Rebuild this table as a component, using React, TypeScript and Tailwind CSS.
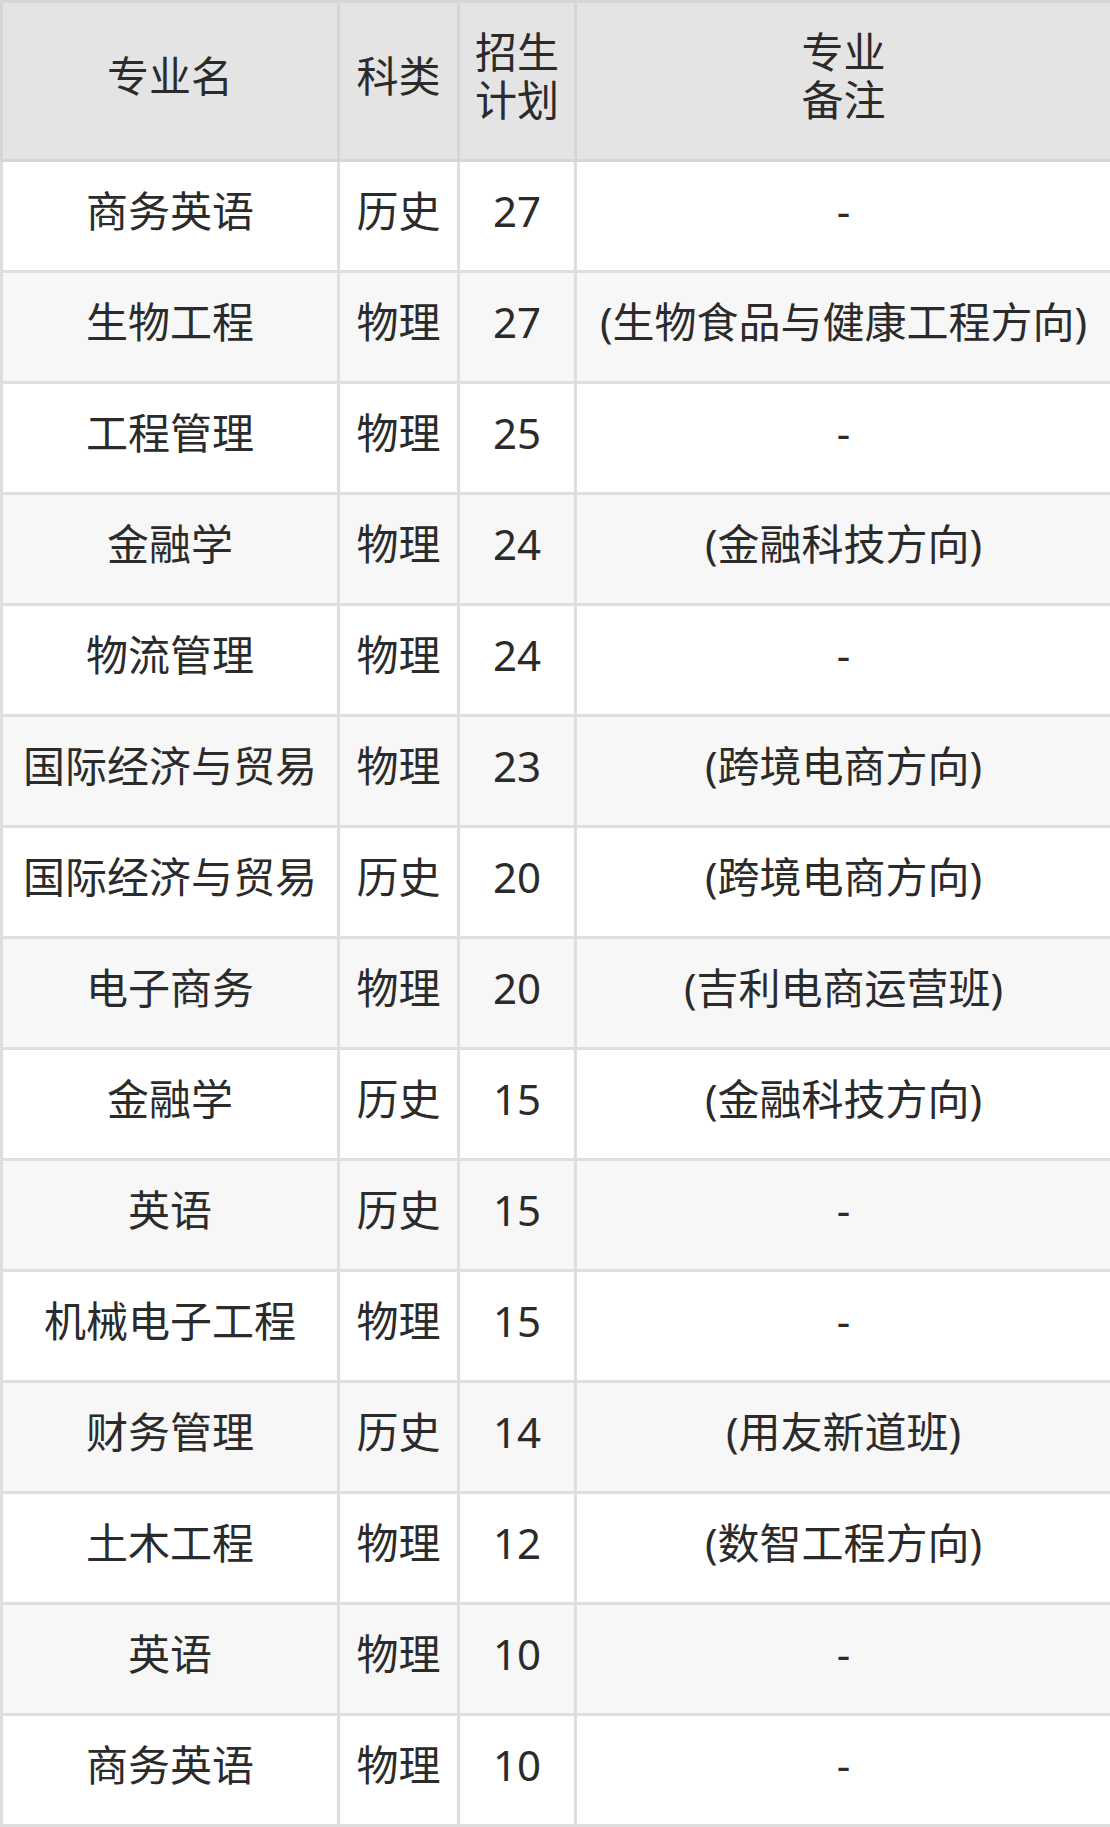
import React from "react";

const rows: [string, string, string, string][] = [
  ["商务英语", "历史", "27", "-"],
  ["生物工程", "物理", "27", "(生物食品与健康工程方向)"],
  ["工程管理", "物理", "25", "-"],
  ["金融学", "物理", "24", "(金融科技方向)"],
  ["物流管理", "物理", "24", "-"],
  ["国际经济与贸易", "物理", "23", "(跨境电商方向)"],
  ["国际经济与贸易", "历史", "20", "(跨境电商方向)"],
  ["电子商务", "物理", "20", "(吉利电商运营班)"],
  ["金融学", "历史", "15", "(金融科技方向)"],
  ["英语", "历史", "15", "-"],
  ["机械电子工程", "物理", "15", "-"],
  ["财务管理", "历史", "14", "(用友新道班)"],
  ["土木工程", "物理", "12", "(数智工程方向)"],
  ["英语", "物理", "10", "-"],
  ["商务英语", "物理", "10", "-"],
];

export default function App() {
  return (
    <div
      className="w-[1110px] bg-white text-[#2b2b2b] text-[42px]"
      style={{ fontFamily: '"Noto Sans", "Noto Sans CJK SC", sans-serif' }}
    >
      <table className="w-[1110px] border-collapse table-fixed border-[3px] border-[#d6d6d6]">
        <colgroup>
          <col className="w-[337px]" />
          <col className="w-[120px]" />
          <col className="w-[117px]" />
          <col className="w-[536px]" />
        </colgroup>
        <thead>
          <tr className="h-[159px] bg-[#e4e4e4] border-b-[3px] border-[#d0d0d0]">
            <th className="font-normal border-[3px] border-[#d6d6d6] leading-[48px] whitespace-nowrap pb-[10px] pt-0">专业名</th>
            <th className="font-normal border-[3px] border-[#d6d6d6] leading-[48px] whitespace-nowrap pb-[10px] pt-0">科类</th>
            <th className="font-normal border-[3px] border-[#d6d6d6] leading-[48px] pb-[10px] pt-0">
              <div className="leading-[48px]">招生</div>
              <div className="leading-[48px]">计划</div>
            </th>
            <th className="font-normal border-[3px] border-[#d6d6d6] leading-[48px] pb-[10px] pt-0">
              <div className="leading-[48px]">专业</div>
              <div className="leading-[48px]">备注</div>
            </th>
          </tr>
        </thead>
        <tbody>
          {rows.map((r, i) => (
            <tr key={i} className={`h-[111px] ${i % 2 === 1 ? "bg-[#f7f7f7]" : "bg-white"}`}>
              {r.map((c, j) => (
                <td
                  key={j}
                  className="border-[3px] border-[#dedede] text-center align-middle whitespace-nowrap leading-[48px] pt-0 pb-[10px] px-0"
                >
                  {c}
                </td>
              ))}
            </tr>
          ))}
        </tbody>
      </table>
    </div>
  );
}
